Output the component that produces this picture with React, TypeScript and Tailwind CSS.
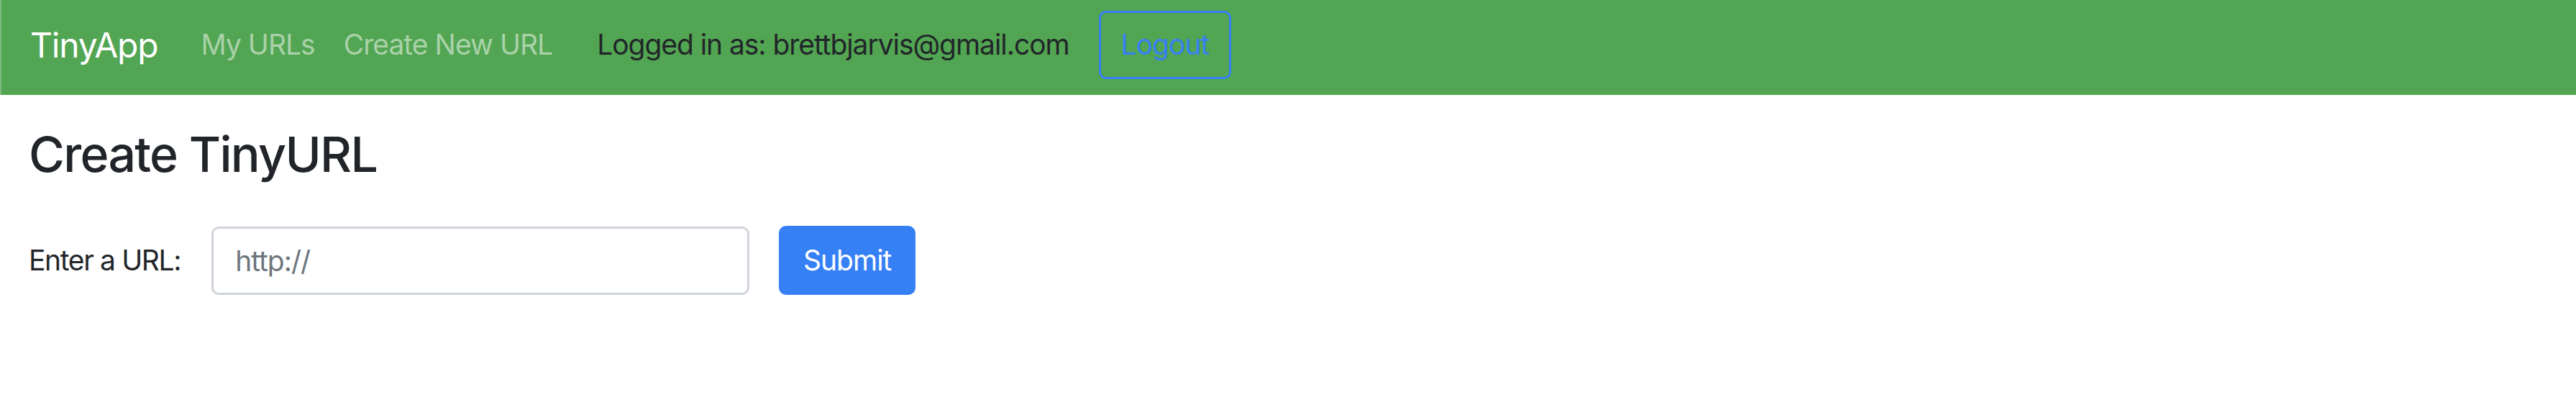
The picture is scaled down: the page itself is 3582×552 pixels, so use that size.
import React from 'react';

const App = () => {
    return (
        <div className="min-h-screen bg-white text-[#212529]" style={{ fontFamily: 'Inter, "Liberation Sans", sans-serif' }}>
            {/* Navbar */}
            <nav className="h-[132px] bg-[#52a552] border-l-[2px] border-[#7dba7d] flex items-center pl-[40px] pb-[8px]">
                <a className="text-[48px] leading-[75px] tracking-[-0.025em] text-white mr-[40px]">TinyApp</a>
                <div className="flex items-center">
                    <a className="text-[39px] leading-[60px] tracking-[-0.025em] text-[#a9d2a9] px-[20px]">My URLs</a>
                    <a className="text-[39px] leading-[60px] tracking-[-0.025em] text-[#a9d2a9] px-[20px]">Create New URL</a>
                </div>
                <span className="text-[39px] leading-[60px] tracking-[-0.027em] text-[#212529] ml-[42px]">
                    Logged in as: brettbjarvis@gmail.com
                </span>
                <button className="ml-[41px] h-[95px] px-[28px] border-[3px] border-[#3680f6] rounded-[10px] text-[39px] leading-[60px] tracking-[-0.025em] text-[#3680f6]">
                    Logout
                </button>
            </nav>

            {/* Content */}
            <div className="px-[40px] pt-[40px]">
                <h3 className="text-[68px] leading-[84px] font-medium tracking-[-0.025em] mb-[20px]">Create TinyURL</h3>

                <form className="flex items-center mt-[58px]">
                    <label className="text-[39px] leading-[60px] tracking-[-0.035em]">Enter a URL:</label>
                    <input
                        type="text"
                        placeholder="http://"
                        className="ml-[43px] w-[748px] h-[95px] px-[30px] border-[3px] border-[#ced4da] rounded-[10px] text-[39px] tracking-[-0.025em] placeholder:text-[#6c757d] outline-none"
                    />
                    <button
                        type="button"
                        className="ml-[41px] h-[96px] w-[190px] bg-[#3680f6] text-white rounded-[10px] text-[39px] leading-[60px] tracking-[-0.025em]"
                    >
                        Submit
                    </button>
                </form>
            </div>
        </div>
    );
};

export default App;
